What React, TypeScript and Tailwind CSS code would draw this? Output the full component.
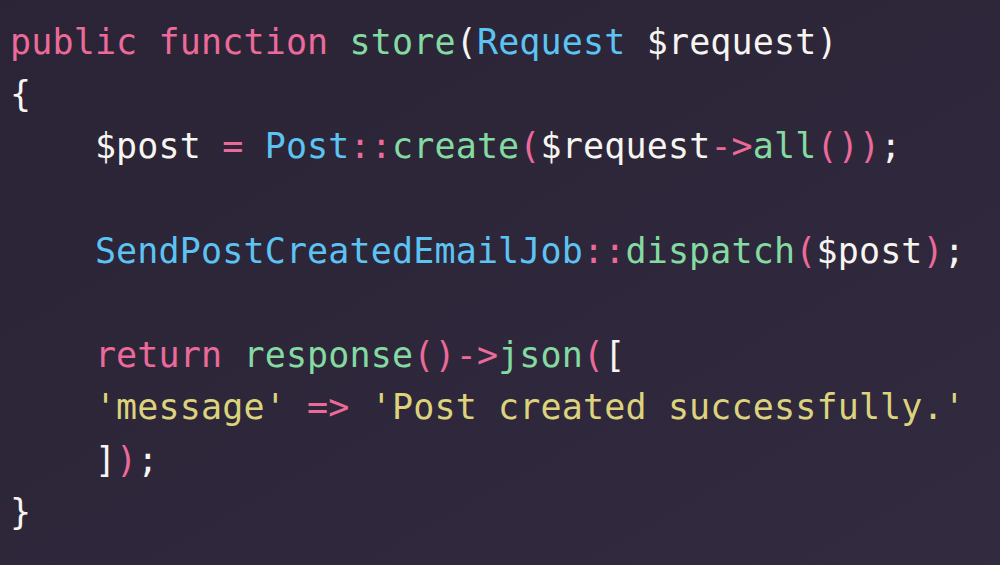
const pink = "text-[#ec6a99]";
const green = "text-[#84dba2]";
const blue = "text-[#5cc3f2]";
const yellow = "text-[#dcd37c]";
const white = "text-[#f7f5f0]";

type Tok = [string, string];

const lines: Tok[][] = [
  [
    ["public function ", pink],
    ["store", green],
    ["(", white],
    ["Request ", blue],
    ["$request)", white],
  ],
  [["{", white]],
  [
    ["    $post ", white],
    ["= ", pink],
    ["Post", blue],
    ["::", pink],
    ["create", green],
    ["(", pink],
    ["$request", white],
    ["->", pink],
    ["all", green],
    ["())", pink],
    [";", white],
  ],
  [],
  [
    ["    SendPostCreatedEmailJob", blue],
    ["::", pink],
    ["dispatch", green],
    ["(", pink],
    ["$post", white],
    [")", pink],
    [";", white],
  ],
  [],
  [
    ["    return ", pink],
    ["response", green],
    ["()->", pink],
    ["json", green],
    ["(", pink],
    ["[", white],
  ],
  [
    ["    'message' ", yellow],
    ["=> ", pink],
    ["'Post created successfully.'", yellow],
  ],
  [
    ["    ]", white],
    [")", pink],
    [";", white],
  ],
  [["}", white]],
];

export default function App() {
  return (
    <div className="w-[1000px] h-[565px] overflow-hidden bg-gradient-to-br from-[#2a2436] to-[#322a3f] pt-[16px] pl-[10px]">
      <pre className="font-['DejaVu_Sans_Mono',monospace] text-[35px] tracking-[0.15px] leading-[52.2px] whitespace-pre">
        {lines.map((line, i) => (
          <div key={i} className="h-[52.2px]">
            {line.map(([t, c], j) => (
              <span key={j} className={c}>
                {t}
              </span>
            ))}
          </div>
        ))}
      </pre>
    </div>
  );
}
